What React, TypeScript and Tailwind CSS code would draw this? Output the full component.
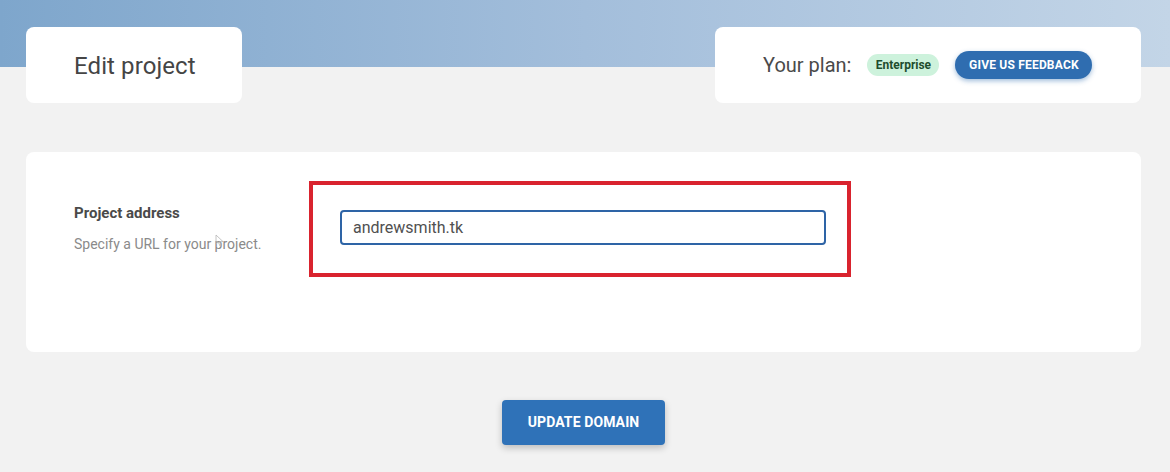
import React from "react";

const App = () => {
  return (
    <div className="relative w-[1170px] h-[472px] overflow-hidden bg-[#f2f2f2] font-['Roboto',sans-serif]">
      {/* header band behind the cards */}
      <div className="absolute left-0 top-0 w-full h-[67px] bg-gradient-to-r from-[#7ea6cc] via-[#a3bedb] to-[#c3d5e7]" />

      <div className="relative pl-[26px] pr-[29px] pt-[27px]">
        <div className="flex justify-between">
          <div className="w-[216px] h-[76px] bg-white rounded-lg flex items-center pl-[48px]">
            <h1 className="text-[24px] text-[#454545] tracking-[0.1px] pt-[2px]">Edit project</h1>
          </div>
          <div className="w-[426px] h-[76px] bg-white rounded-lg flex items-center pl-[48px]">
            <span className="text-[20px] text-[#4a4a4a]">Your plan:</span>
            <span className="ml-[16px] h-[22px] w-[72px] flex items-center justify-center rounded-full bg-[#cdf2dc] text-[12px] font-bold text-[#1e4d2e]">
              Enterprise
            </span>
            <button className="ml-[16px] h-[28px] w-[137px] rounded-full bg-[#2f6db0] text-white text-[12px] font-bold tracking-[0.2px] shadow-[0_2px_5px_rgba(47,109,176,0.45)]">
              GIVE US FEEDBACK
            </button>
          </div>
        </div>

        <div className="mt-[49px] h-[200px] bg-white rounded-lg flex pl-[48px] pt-[29px]">
          <div className="w-[235px] pt-[22px] relative">
            <div className="text-[15px] leading-[20px] font-bold text-[#4a4a4a]">Project address</div>
            <div className="mt-[12px] text-[14px] leading-[18px] text-[#8a8a8a]">Specify a URL for your project.</div>
            <svg className="absolute left-[141px] top-[53px]" width="9" height="13" viewBox="0 0 9 13">
              <path d="M1 1 L1 10 L3.3 8 L5 12 L6.3 11.4 L4.7 7.6 L8 7.6 Z" fill="none" stroke="#b5b5b5" strokeWidth="0.8" />
            </svg>
          </div>
          <div className="w-[542px] h-[96px] border-4 border-[#d9232e] pl-[27px] pt-[25px]">
            <input
              readOnly
              value="andrewsmith.tk"
              className="w-[486px] h-[35px] border-2 border-[#2e64a6] rounded-[4px] px-[11px] text-[16px] text-[#505050] outline-none font-['Roboto',sans-serif]"
            />
          </div>
        </div>

        <div className="flex justify-center mt-[48px]">
          <button className="w-[163px] h-[45px] rounded-[4px] bg-[#2f72b8] text-white text-[14px] font-bold tracking-[0.1px] shadow-[0_3px_7px_rgba(0,0,0,0.22)]">
            UPDATE DOMAIN
          </button>
        </div>
      </div>
    </div>
  );
};

export default App;
